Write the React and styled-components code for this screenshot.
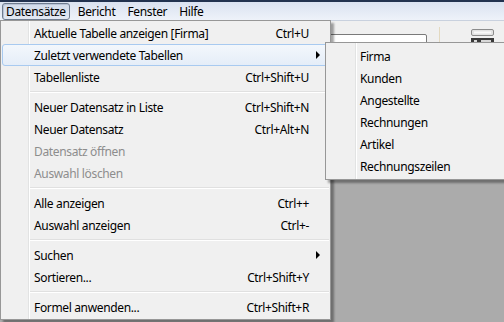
import styled, { createGlobalStyle } from 'styled-components'

const GlobalStyle = createGlobalStyle`
  html, body {
    margin: 0;
    padding: 0;
  }
  body {
    font-family: 'Noto Sans', 'Liberation Sans', sans-serif;
    font-size: 12px;
    letter-spacing: -0.35px;
    color: #000;
  }
`

const mainItems = [
  { label: 'Aktuelle Tabelle anzeigen [Firma]', shortcut: 'Ctrl+U' },
  { label: 'Zuletzt verwendete Tabellen', submenu: true, active: true },
  { label: 'Tabellenliste', shortcut: 'Ctrl+Shift+U' },
  { separator: true },
  { label: 'Neuer Datensatz in Liste', shortcut: 'Ctrl+Shift+N' },
  { label: 'Neuer Datensatz', shortcut: 'Ctrl+Alt+N' },
  { label: 'Datensatz öffnen', disabled: true },
  { label: 'Auswahl löschen', disabled: true },
  { separator: true },
  { label: 'Alle anzeigen', shortcut: 'Ctrl++' },
  { label: 'Auswahl anzeigen', shortcut: 'Ctrl+-' },
  { separator: true },
  { label: 'Suchen', submenu: true },
  { label: 'Sortieren...', shortcut: 'Ctrl+Shift+Y' },
  { separator: true },
  { label: 'Formel anwenden...', shortcut: 'Ctrl+Shift+R' },
]

const recentTables = ['Firma', 'Kunden', 'Angestellte', 'Rechnungen', 'Artikel', 'Rechnungszeilen']

const menuBarItems = ['Datensätze', 'Bericht', 'Fenster', 'Hilfe']

function MenuEntries({ items, indent }) {
  return items.map((item, i) =>
    item.separator ? (
      <Separator key={i} $indent={indent} />
    ) : (
      <Row key={i} $active={item.active} $disabled={item.disabled} $indent={indent}>
        <Label>{item.label}</Label>
        {item.shortcut && <Shortcut>{item.shortcut}</Shortcut>}
        {item.submenu && <Arrow />}
      </Row>
    )
  )
}

export default function App() {
  return (
    <>
      <GlobalStyle />
      <Screen>
        <TitleEdge />
        <MenuBar>
          {menuBarItems.map((name, i) => (
            <MenuBarItem key={name} $open={i === 0}>{name}</MenuBarItem>
          ))}
        </MenuBar>
        <Workspace>
          <Toolbar>
            <SearchBox />
            <ToolSeparator />
            <ToolIcon viewBox="0 0 25 14">
              <rect x="1.5" y="0.5" width="22" height="6" rx="1.5" fill="#e4e4e4" stroke="#8c8c8c" />
              <rect x="4" y="2.5" width="17" height="2" fill="#fafafa" />
              <rect x="1" y="9" width="23" height="5" fill="#3a3a3a" />
              <rect x="4" y="11" width="3" height="3" fill="#d8d8d8" />
              <rect x="11" y="11" width="10" height="3" fill="#d8d8d8" />
            </ToolIcon>
          </Toolbar>
          <MdiArea />
        </Workspace>

        <Dropdown $left={0} $top={20} $width={331} $gutter={27}>
          <MenuEntries items={mainItems} indent={31} />
        </Dropdown>

        <Dropdown $left={325} $top={42} $width={200} $gutter={29} $padY={2}>
          <MenuEntries items={recentTables.map(label => ({ label }))} indent={32} />
        </Dropdown>
      </Screen>
    </>
  )
}

const Screen = styled.div`
  position: relative;
  width: 504px;
  height: 322px;
  overflow: hidden;
  display: flex;
  flex-direction: column;
  background: #ababab;
`

const TitleEdge = styled.div`
  height: 2px;
  background: #22324f;
`

const MenuBar = styled.div`
  height: 17px;
  display: flex;
  align-items: stretch;
  gap: 4px;
  padding: 1px 2px 0;
  background: linear-gradient(#dae2f0, #eef2f9);
  border-bottom: 1px solid #c9d1de;
`

const MenuBarItem = styled.div`
  display: flex;
  align-items: center;
  padding: 0 3px 1px 3px;
  border: 1px solid ${p => (p.$open ? '#6f7c90' : 'transparent')};
  border-radius: 3px;
  background: ${p => (p.$open ? 'linear-gradient(#d2dbea, #e2e8f3)' : 'transparent')};
  box-shadow: ${p => (p.$open ? 'inset 1px 1px 0 #b8c3d6' : 'none')};
`

const Workspace = styled.div`
  flex: 1;
  display: flex;
  flex-direction: column;
`

const Toolbar = styled.div`
  height: 24px;
  display: flex;
  justify-content: flex-end;
  align-items: flex-start;
  background: #f0f0f0;
`

const SearchBox = styled.div`
  width: 100px;
  height: 20px;
  margin-top: 13px;
  margin-right: 12px;
  background: #fff;
  border: 1px solid #7a7a7a;
  border-radius: 2px;
`

const ToolSeparator = styled.div`
  width: 1px;
  height: 17px;
  margin-top: 6px;
  background: #e3d9c0;
`

const ToolIcon = styled.svg`
  width: 25px;
  height: 14px;
  margin: 8px 9px 0 30px;
`

const MdiArea = styled.div`
  flex: 1;
  background: #ababab;
`

const Dropdown = styled.div`
  position: absolute;
  left: ${p => p.$left}px;
  top: ${p => p.$top}px;
  width: ${p => p.$width}px;
  box-sizing: border-box;
  padding: ${p => p.$padY || 1}px 1px;
  border: 1px solid #979797;
  background:
    linear-gradient(to right,
      transparent ${p => p.$gutter}px,
      #e2e3e3 ${p => p.$gutter}px,
      #e2e3e3 ${p => p.$gutter + 1}px,
      #ffffff ${p => p.$gutter + 1}px,
      #ffffff ${p => p.$gutter + 2}px,
      transparent ${p => p.$gutter + 2}px),
    #f0f0f0;
  box-shadow: 3px 3px 2px rgba(0, 0, 0, 0.35);
`

const Row = styled.div`
  height: 22px;
  box-sizing: border-box;
  display: flex;
  align-items: center;
  padding: 0 8px 0 ${p => p.$indent}px;
  color: ${p => (p.$disabled ? '#8d8d8d' : '#000')};
  border: 1px solid ${p => (p.$active ? '#a8caf0' : 'transparent')};
  border-radius: 3px;
  background: ${p => (p.$active ? 'linear-gradient(#f3f7fc, #e5edf8)' : 'transparent')};
  white-space: nowrap;
`

const Label = styled.span`
  flex: 1;
`

const Shortcut = styled.span`
  margin-right: 11px;
`

const Arrow = styled.span`
  width: 0;
  height: 0;
  border-left: 4px solid #000;
  border-top: 4px solid transparent;
  border-bottom: 4px solid transparent;
`

const Separator = styled.div`
  height: 0;
  margin: 3px 0 3px ${p => p.$indent - 3}px;
  border-top: 1px solid #e0e0e0;
  border-bottom: 1px solid #fff;
`
